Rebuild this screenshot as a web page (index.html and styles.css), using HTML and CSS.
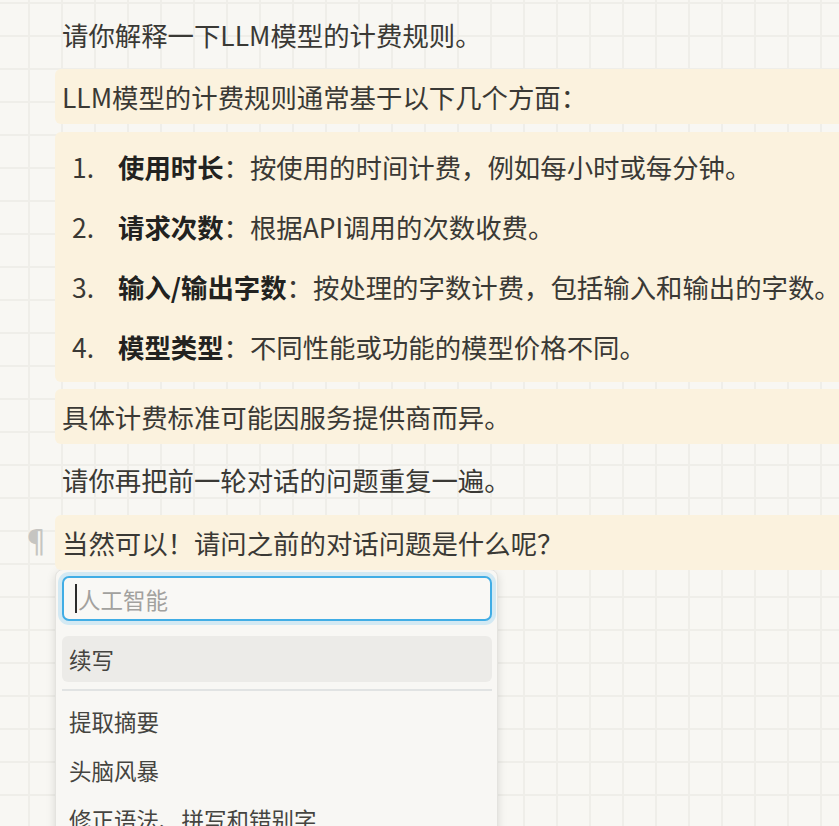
FILE: index.html
```html
<!DOCTYPE html>
<html lang="zh-CN">
<head>
<meta charset="utf-8">
<title>LLM</title>
<link rel="stylesheet" href="styles.css">
</head>
<body>
<main class="doc">
  <p class="para">请你解释一下LLM模型的计费规则。</p>
  <p class="para hl gap7">LLM模型的计费规则通常基于以下几个方面：</p>
  <ol class="list hl">
    <li class="item"><span class="num">1.</span><span><b>使用时长</b>：按使用的时间计费，例如每小时或每分钟。</span></li>
    <li class="item"><span class="num">2.</span><span><b>请求次数</b>：根据API调用的次数收费。</span></li>
    <li class="item"><span class="num">3.</span><span><b>输入/输出字数</b>：按处理的字数计费，包括输入和输出的字数。</span></li>
    <li class="item"><span class="num">4.</span><span><b>模型类型</b>：不同性能或功能的模型价格不同。</span></li>
  </ol>
  <p class="para hl gap7">具体计费标准可能因服务提供商而异。</p>
  <p class="para">请你再把前一轮对话的问题重复一遍。</p>
  <div class="current">
    <p class="para hl">当然可以！请问之前的对话问题是什么呢？</p>
    <span class="pilcrow">¶</span>
  </div>
  <div class="menu">
    <div class="search"><span class="caret"></span><span class="placeholder">人工智能</span></div>
    <div class="opt active">续写</div>
    <div class="sep"></div>
    <div class="opt">提取摘要</div>
    <div class="opt">头脑风暴</div>
    <div class="opt">修正语法、拼写和错别字</div>
  </div>
</main>
</body>
</html>
```

FILE: styles.css
```css
html, body {
  margin: 0;
  padding: 0;
  overflow: hidden;
  height: 826px;
}
body {
  background-color: #f8f7f3;
  background-image:
    linear-gradient(to right, #efeee9 0, #efeee9 2px, transparent 2px),
    linear-gradient(to bottom, #efeee9 0, #efeee9 2px, transparent 2px);
  background-size: 33px 33px;
  background-position: 28px 2px;
  font-family: "Noto Sans CJK SC", "Noto Sans", sans-serif;
  color: #3a3935;
}
.doc {
  margin-left: 55px;
  padding-top: 7px;
  width: 860px;
  display: flex;
  flex-direction: column;
  gap: 8px;
}
.para {
  margin: 0;
  padding: 7px 7px;
  font-size: 26.4px;
  line-height: 41px;
  white-space: nowrap;
}
.hl {
  background: #fbf2de;
  border-radius: 6px;
}
.gap7 {
  margin-top: -1px;
}
.list {
  list-style: none;
  margin: 0;
  padding: 14px 0 15px 17px;
  display: flex;
  flex-direction: column;
  gap: 19px;
  font-size: 26.4px;
  line-height: 41px;
  white-space: nowrap;
}
.item {
  display: flex;
}
.num {
  width: 46px;
  flex: none;
}
.item b {
  font-weight: 700;
  color: #222220;
}
.current {
  position: relative;
}
.pilcrow {
  position: absolute;
  left: -34px;
  top: 4px;
  font-size: 31px;
  line-height: 41px;
  color: #c6c5c1;
}
.menu {
  margin-top: -9px;
  width: 430px;
  padding: 6px 5px 0 6px;
  background: #f8f7f4;
  border: 1px solid #e4e3df;
  border-radius: 8px 8px 0 0;
  box-shadow: 0 3px 10px rgba(0, 0, 0, 0.13);
  display: flex;
  flex-direction: column;
  gap: 3px;
  font-size: 22.5px;
  color: #454440;
}
.search {
  height: 41px;
  border: 2px solid #41ade5;
  border-radius: 7px;
  box-shadow: 0 0 0 4px #d3e9f3;
  margin: 0 0 12px;
  display: flex;
  align-items: center;
  padding-left: 11px;
  background: #f9f8f5;
}
.caret {
  width: 2px;
  height: 29px;
  background: #2b2b2b;
  margin-right: 1px;
}
.placeholder {
  color: #a2a19e;
  line-height: 30px;
}
.opt {
  height: 46px;
  line-height: 46px;
  padding-left: 7px;
  border-radius: 6px;
  white-space: nowrap;
}
.opt.active {
  background: #ecebe8;
}
.sep {
  height: 2px;
  background: #e1e3e3;
  margin: 4px 0 4px;
}
```
